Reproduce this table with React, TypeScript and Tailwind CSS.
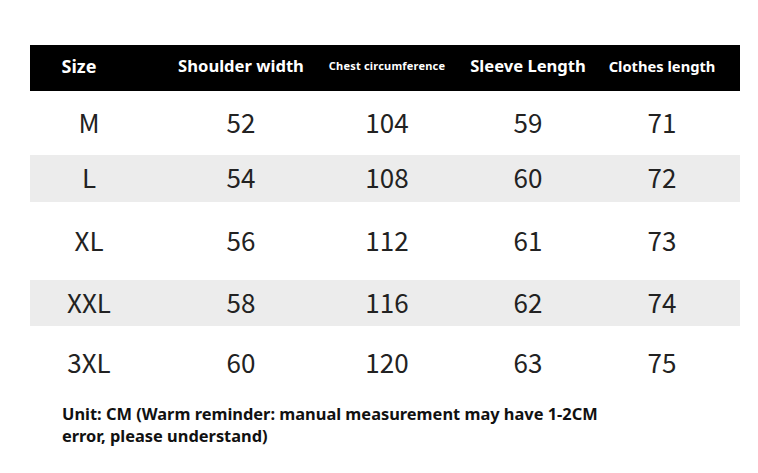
import React from "react";

const rows = [
  { s: "M", v: ["52", "104", "59", "71"], h: "h-[64px]", bg: "bg-white" },
  { s: "L", v: ["54", "108", "60", "72"], h: "h-[47px]", bg: "bg-[#ececec]" },
  { s: "XL", v: ["56", "112", "61", "73"], h: "h-[78px]", bg: "bg-white" },
  { s: "XXL", v: ["58", "116", "62", "74"], h: "h-[46px]", bg: "bg-[#ececec]" },
  { s: "3XL", v: ["60", "120", "63", "75"], h: "h-[74px]", bg: "bg-white" },
];

const cols = "grid grid-cols-[118px_186px_106px_176px_92px_32px]";

export default function App() {
  return (
    <div className="w-[758px] h-[473px] bg-white overflow-hidden" style={{ fontFamily: "'Noto Sans', 'Noto Sans CJK SC', sans-serif" }}>
      <div className="pt-[45px] pl-[30px]">
        <div className="w-[710px]">
          <div className={`${cols} h-[46px] pb-[3px] bg-black text-white font-bold items-center`}>
            <div className="flex justify-center pr-[20px] text-[18px] whitespace-nowrap">Size</div>
            <div className="flex justify-center text-[16.6px] whitespace-nowrap">Shoulder width</div>
            <div className="flex justify-center text-[11px] tracking-[0.2px] whitespace-nowrap">Chest circumference</div>
            <div className="flex justify-center text-[16.6px] whitespace-nowrap">Sleeve Length</div>
            <div className="flex justify-center text-[14.7px] whitespace-nowrap">Clothes length</div>
            <div />
          </div>
          {rows.map((r) => (
            <div key={r.s} className={`${cols} ${r.h} ${r.bg} pb-[4px] items-center text-[#222] text-[26px]`} style={{ fontFamily: "'Noto Sans CJK SC', 'Noto Sans', sans-serif" }}>
              <div className="flex justify-center whitespace-nowrap">{r.s}</div>
              {r.v.map((x, i) => (
                <div key={i} className="flex justify-center whitespace-nowrap">{x}</div>
              ))}
              <div />
            </div>
          ))}
        </div>
      </div>
      <div className="pl-[62px] pt-[3px] text-[16.4px] leading-[22px] font-bold text-[#111]">
        Unit: CM (Warm reminder: manual measurement may have 1-2CM
        <br />
        error, please understand)
      </div>
    </div>
  );
}
